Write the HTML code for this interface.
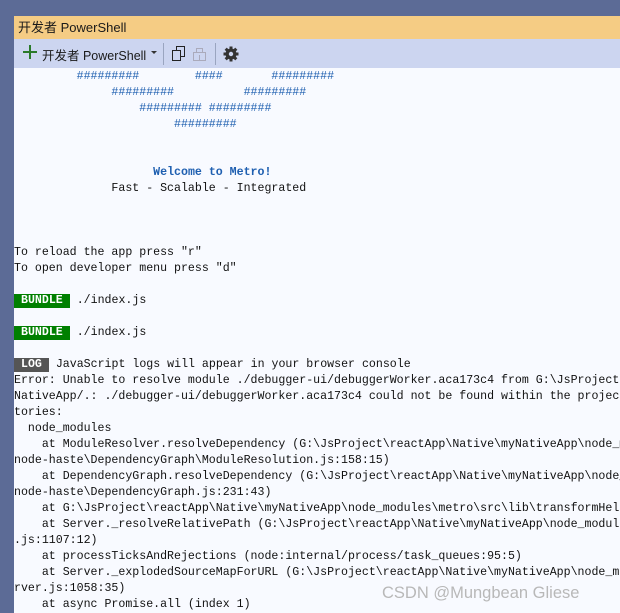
<!DOCTYPE html>
<html><head><meta charset="utf-8"><style>
*{margin:0;padding:0;box-sizing:border-box}
body{width:620px;height:613px;overflow:hidden;background:#5c6b96;position:relative;font-family:"Liberation Sans","Noto Sans CJK SC",sans-serif}
#title{position:absolute;left:14px;top:16px;width:606px;height:23px;background:#f5cc84;font-size:13px;line-height:23px;padding-left:4px;color:#1a1a1a}
#tb{position:absolute;left:14px;top:39px;width:606px;height:29px;background:#ccd5f0;font-size:12.5px;color:#1a1a1a}
#con{position:absolute;left:14px;top:68px;width:606px;height:545px;background:#f8faff;overflow:hidden}
pre{font-family:"Liberation Mono",monospace;font-size:11.6px;line-height:16px;color:#111;white-space:pre;margin-top:1px}
.b{color:#1e5fb0}
.w{color:#1e5fb0;font-weight:bold}
.g{background:#008000;color:#fff;padding:0 7px;display:inline-block;line-height:14px;font-weight:bold}
.l{background:#555;color:#fff;padding:0 7px;display:inline-block;line-height:14px;font-weight:bold}
#wm{position:absolute;left:382px;top:584px;font-size:16.5px;color:#b8b8b8;font-family:"Liberation Sans",sans-serif}
</style></head><body>
<div id="title">开发者 PowerShell</div>
<div id="tb">
<svg style="position:absolute;left:9px;top:6px" width="14" height="14"><path d="M7 0V14M0 7H14" stroke="#2a7a2a" stroke-width="2"/></svg>
<span style="position:absolute;left:28px;top:6px">开发者 PowerShell</span>
<svg style="position:absolute;left:137px;top:12px" width="6" height="4"><path d="M0 0H6L3 3Z" fill="#333"/></svg>
<div style="position:absolute;left:149px;top:4px;width:1px;height:22px;background:#9aa5c0"></div>
<svg style="position:absolute;left:158px;top:7px" width="14" height="16"><rect x="0.5" y="4.5" width="8" height="10" fill="none" stroke="#222"/><path d="M4.5 4.5V0.5H12.5V10.5H8.5" fill="none" stroke="#222"/></svg>
<svg style="position:absolute;left:179px;top:7px" width="14" height="16"><rect x="0.5" y="6.5" width="12" height="8" fill="none" stroke="#aab"/><path d="M3.5 6.5V2.5H9.5V6.5M6.5 9V14" fill="none" stroke="#aab"/></svg>
<div style="position:absolute;left:201px;top:4px;width:1px;height:22px;background:#9aa5c0"></div>
<svg style="position:absolute;left:209px;top:7px" width="16" height="16" viewBox="0 0 16 16"><g fill="#333"><circle cx="8" cy="8" r="5.5"/><rect x="6.5" y="0.5" width="3" height="15"/><rect x="0.5" y="6.5" width="15" height="3"/><rect x="6.5" y="0.5" width="3" height="15" transform="rotate(45 8 8)"/><rect x="6.5" y="0.5" width="3" height="15" transform="rotate(-45 8 8)"/></g><circle cx="8" cy="8" r="2.2" fill="#ccd5f0"/></svg>
</div>
<div id="con"><pre><span class="b">         #########        ####       #########</span>
<span class="b">              #########          #########</span>
<span class="b">                  ######### #########</span>
<span class="b">                       #########</span>


                    <span class="w">Welcome to Metro!</span>
              Fast - Scalable - Integrated



To reload the app press "r"
To open developer menu press "d"

<span class="g">BUNDLE</span> ./index.js

<span class="g">BUNDLE</span> ./index.js

<span class="l">LOG</span> JavaScript logs will appear in your browser console
Error: Unable to resolve module ./debugger-ui/debuggerWorker.aca173c4 from G:\JsProject\reactApp\Native\my
NativeApp/.: ./debugger-ui/debuggerWorker.aca173c4 could not be found within the project or in these direc
tories:
  node_modules
    at ModuleResolver.resolveDependency (G:\JsProject\reactApp\Native\myNativeApp\node_modules\metro\src\
node-haste\DependencyGraph\ModuleResolution.js:158:15)
    at DependencyGraph.resolveDependency (G:\JsProject\reactApp\Native\myNativeApp\node_modules\metro\src\
node-haste\DependencyGraph.js:231:43)
    at G:\JsProject\reactApp\Native\myNativeApp\node_modules\metro\src\lib\transformHelpers.js:129:24
    at Server._resolveRelativePath (G:\JsProject\reactApp\Native\myNativeApp\node_modules\metro\src\Server
.js:1107:12)
    at processTicksAndRejections (node:internal/process/task_queues:95:5)
    at Server._explodedSourceMapForURL (G:\JsProject\reactApp\Native\myNativeApp\node_modules\metro\src\Se
rver.js:1058:35)
    at async Promise.all (index 1)</pre></div>
<div id="wm">CSDN @Mungbean Gliese</div>
</body></html>
